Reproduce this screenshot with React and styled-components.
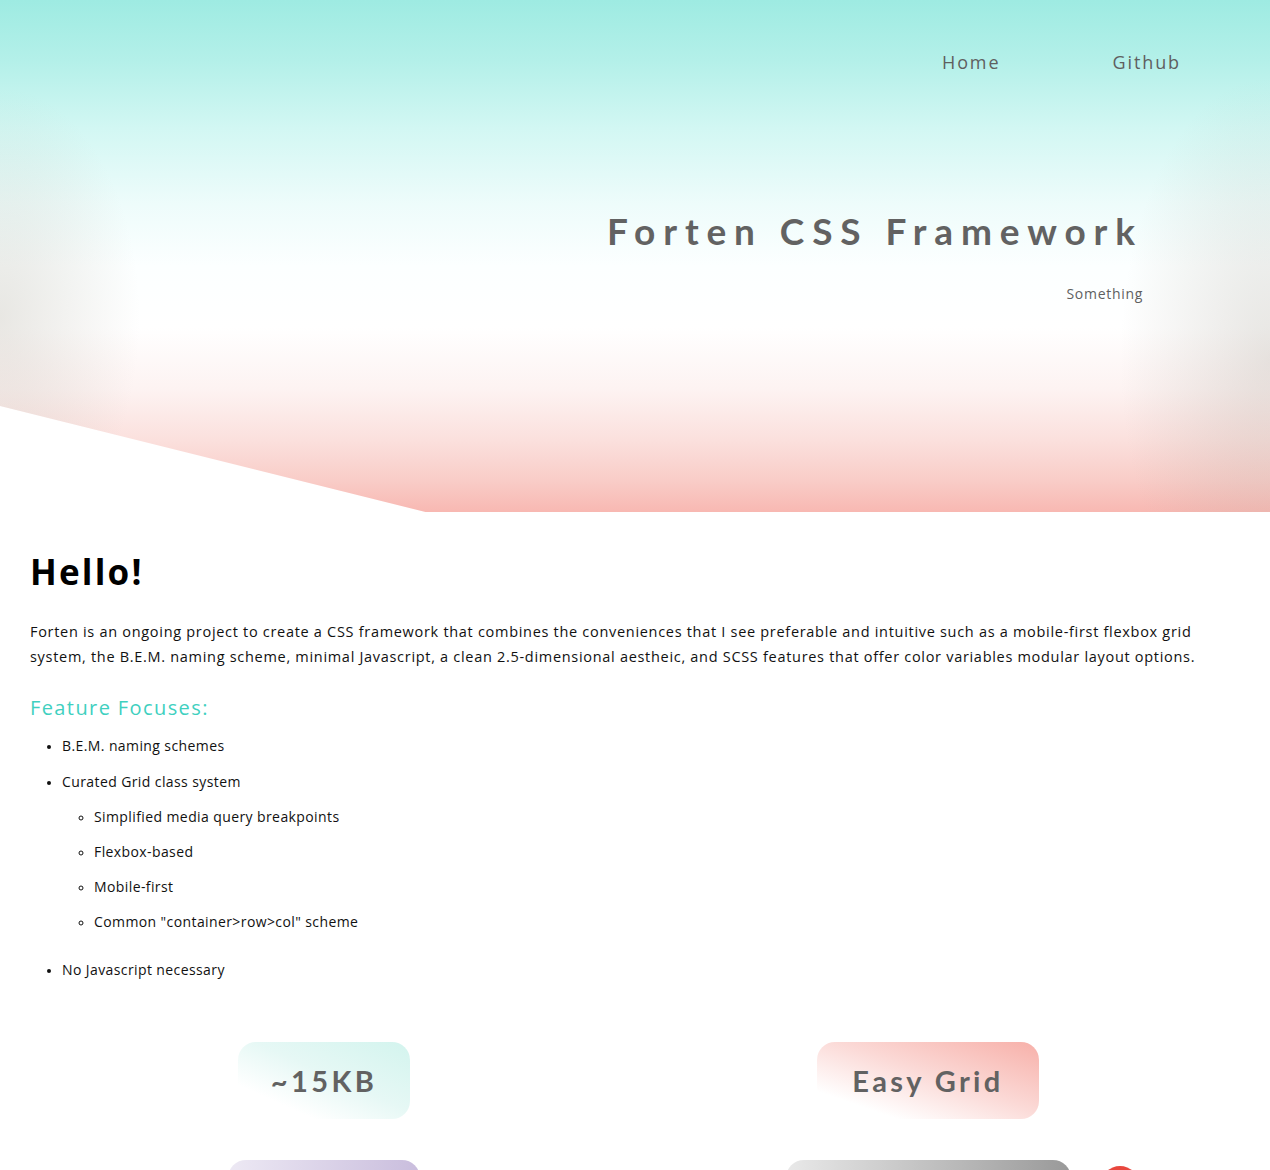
import React from "react";
import styled, { createGlobalStyle } from "styled-components";

const Global = createGlobalStyle`
  html, body { margin: 0; padding: 0; background: #fff; }
  body { font-family: "Open Sans", "Noto Sans", sans-serif; color: #111; overflow: hidden; }
  * { box-sizing: border-box; }
`;

const Hero = styled.header`
  height: 512px;
  position: relative;
  display: flex;
  flex-direction: column;
  clip-path: polygon(0 0, 100% 0, 100% 100%, 33.5% 100%, 0 79.3%);
  background-image:
    radial-gradient(ellipse 140px 45% at 0% 62%, rgba(185, 180, 168, 0.32), rgba(185, 180, 168, 0)),
    radial-gradient(ellipse 150px 55% at 100% 70%, rgba(175, 170, 160, 0.3), rgba(175, 170, 160, 0)),
    linear-gradient(to bottom, #9eebe2 0%, #b4f0e9 12%, #d2f7f3 25%, #eefcfb 40%, #fcffff 52%, #ffffff 64%, #fdf3f2 76%, #fbe0dd 86%, #f9ccc7 94%, #f8b8b2 100%);
`;

const Nav = styled.nav`
  display: flex;
  justify-content: flex-end;
  gap: 112px;
  padding: 50px 89px 0 0;
`;

const NavLink = styled.a`
  font-family: "Open Sans", sans-serif;
  font-size: 18px;
  letter-spacing: 1.9px;
  color: #5f5f5f;
  text-decoration: none;
  line-height: 24px;
`;

const HeroText = styled.div`
  display: flex;
  flex-direction: column;
  align-items: flex-end;
  padding: 134px 127px 0 0;
`;

const Title = styled.h1`
  margin: 0;
  font-family: "Lato", "Open Sans", sans-serif;
  font-weight: 700;
  font-size: 37px;
  letter-spacing: 7.9px;
  color: #626262;
  line-height: 46px;
`;

const Sub = styled.p`
  margin: 30px 0 0;
  font-size: 14px;
  letter-spacing: 0.7px;
  color: #5f5f5f;
  line-height: 20px;
`;

const Main = styled.main`
  padding: 40px 30px 0;
`;

const Hello = styled.h2`
  margin: 0;
  font-family: "Open Sans", sans-serif;
  font-weight: 700;
  font-size: 35px;
  letter-spacing: 2.2px;
  line-height: 40px;
  color: #000;
`;

const Para = styled.p`
  margin: 27px 0 0;
  font-size: 14.5px;
  line-height: 25px;
  letter-spacing: 0.7px;
  color: #111;
`;

const SubHead = styled.h3`
  margin: 26px 0 0;
  font-weight: 400;
  font-size: 20px;
  letter-spacing: 1.4px;
  line-height: 26px;
  color: #3fd0bf;
`;

const List = styled.ul`
  margin: 15px 0 0;
  padding-left: 32px;
  list-style: ${(p) => (p.$nested ? "circle" : "disc")};
  ${(p) => p.$nested && "margin: 15px 0 28px; padding-left: 32px;"}
`;

const Item = styled.li`
  font-size: 14px;
  letter-spacing: 0.4px;
  line-height: 20px;
  color: #111;
  margin-bottom: ${(p) => (p.$tight ? "15px" : "16px")};
  &::marker { font-size: 11px; }
`;

const Features = styled.section`
  display: grid;
  grid-template-columns: 604px 604px;
  row-gap: 41px;
  margin: 62px 0 0 -8px;
`;

const Cell = styled.div`
  display: flex;
  justify-content: center;
`;

const Badge = styled.div`
  position: relative;
  height: 77px;
  min-width: ${(p) => p.$w}px;
  border-radius: 18px;
  display: flex;
  align-items: center;
  justify-content: center;
  background: ${(p) => p.$bg};
  font-family: "Lato", "Open Sans", sans-serif;
  font-weight: 700;
  font-size: 29px;
  letter-spacing: 3.4px;
  color: #626262;
`;

const Dot = styled.span`
  position: absolute;
  left: calc(100% + 30px);
  top: 6px;
  width: 38px;
  height: 38px;
  border-radius: 50%;
  background: #e8473e;
`;

export default function App() {
  return (
    <>
      <Global />
      <Hero>
        <Nav>
          <NavLink href="#">Home</NavLink>
          <NavLink href="#">Github</NavLink>
        </Nav>
        <HeroText>
          <Title>Forten CSS Framework</Title>
          <Sub>Something</Sub>
        </HeroText>
      </Hero>
      <Main>
        <Hello>Hello!</Hello>
        <Para>
          Forten is an ongoing project to create a CSS framework that combines the conveniences that I see preferable and intuitive such as a mobile-first flexbox grid system, the B.E.M. naming scheme, minimal Javascript, a clean 2.5-dimensional aestheic, and SCSS features that offer color variables modular layout options.
        </Para>
        <SubHead>Feature Focuses:</SubHead>
        <List>
          <Item>B.E.M. naming schemes</Item>
          <Item>
            Curated Grid class system
            <List $nested>
              <Item $tight>Simplified media query breakpoints</Item>
              <Item $tight>Flexbox-based</Item>
              <Item $tight>Mobile-first</Item>
              <Item $tight>Common "container&gt;row&gt;col" scheme</Item>
            </List>
          </Item>
          <Item>No Javascript necessary</Item>
        </List>
        <Features>
          <Cell>
            <Badge $w={172} $bg="linear-gradient(to top right, #ffffff 22%, #e6f8f5 55%, #d3f4ee 100%)">~15KB</Badge>
          </Cell>
          <Cell>
            <Badge $w={222} $bg="linear-gradient(to top right, #ffffff 18%, #fbd9d6 55%, #f7b0a9 100%)">Easy Grid</Badge>
          </Cell>
          <Cell>
            <Badge $w={192} $bg="linear-gradient(to right, #ede9f4, #c9bddd)" />
          </Cell>
          <Cell>
            <Badge $w={285} $bg="linear-gradient(to right, #e9e9e9, #999999)">
              <Dot />
            </Badge>
          </Cell>
        </Features>
      </Main>
    </>
  );
}
